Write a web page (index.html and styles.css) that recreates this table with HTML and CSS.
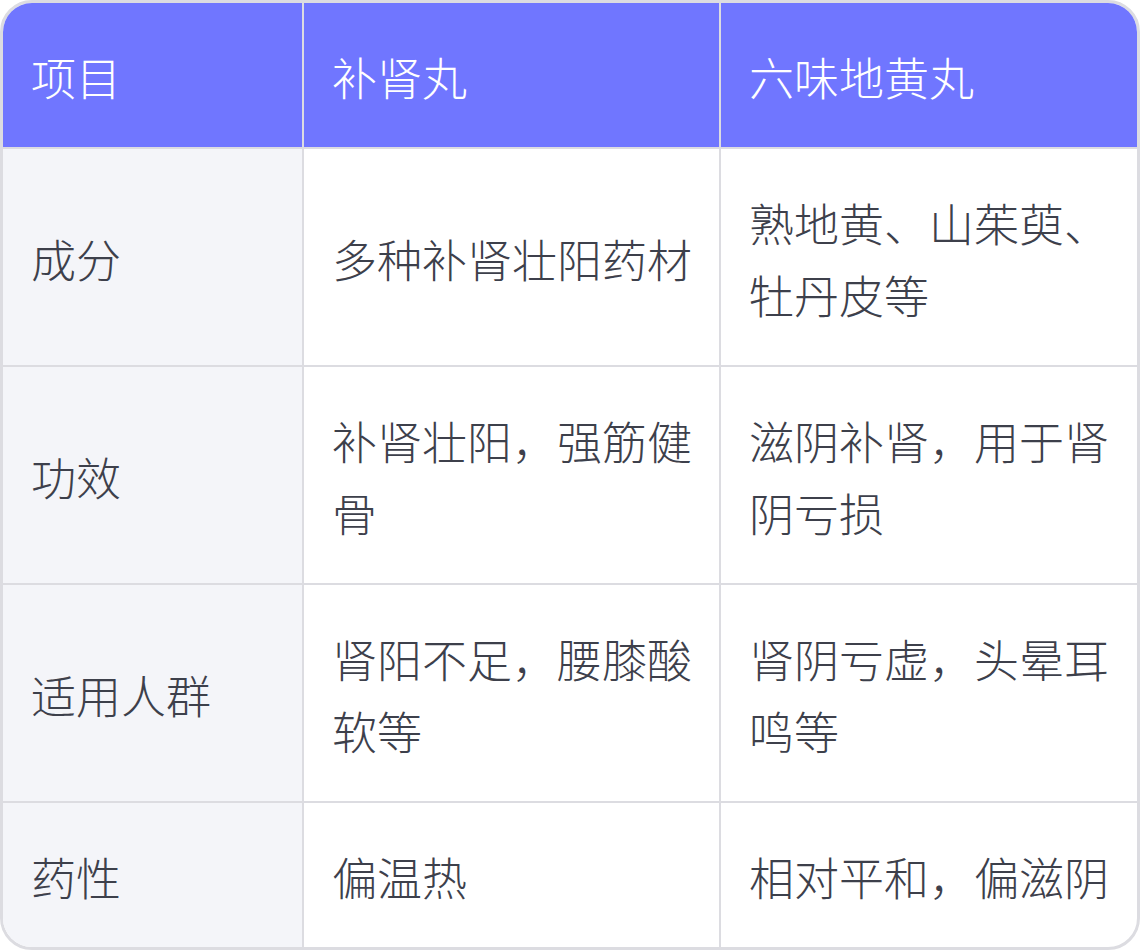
FILE: index.html
```html
<!DOCTYPE html>
<html lang="zh-CN">
<head>
<meta charset="utf-8">
<title>补肾丸与六味地黄丸对比</title>
<link rel="stylesheet" href="styles.css">
</head>
<body>
<div class="table-wrap">
  <table class="compare">
    <colgroup>
      <col class="c1">
      <col class="c2">
      <col class="c3">
    </colgroup>
    <thead>
      <tr>
        <th>项目</th>
        <th>补肾丸</th>
        <th>六味地黄丸</th>
      </tr>
    </thead>
    <tbody>
      <tr>
        <td class="label">成分</td>
        <td>多种补肾壮阳药材</td>
        <td>熟地黄、山茱萸、牡丹皮等</td>
      </tr>
      <tr>
        <td class="label">功效</td>
        <td>补肾壮阳，强筋健骨</td>
        <td>滋阴补肾，用于肾阴亏损</td>
      </tr>
      <tr>
        <td class="label">适用人群</td>
        <td>肾阳不足，腰膝酸软等</td>
        <td>肾阴亏虚，头晕耳鸣等</td>
      </tr>
      <tr>
        <td class="label">药性</td>
        <td>偏温热</td>
        <td>相对平和，偏滋阴</td>
      </tr>
    </tbody>
  </table>
</div>
</body>
</html>
```

FILE: styles.css
```css
html, body {
  margin: 0;
  padding: 0;
  background: #ffffff;
}

body {
  font-family: "Noto Sans CJK SC", "Noto Sans", sans-serif;
  color: #3d404b;
}

.table-wrap {
  width: 1140px;
  box-sizing: border-box;
  border: 3px solid #dcdce1;
  border-radius: 32px;
  overflow: hidden;
  background: #ffffff;
}

.compare {
  width: 100%;
  border-collapse: separate;
  border-spacing: 0;
  table-layout: fixed;
}

.c1 { width: 301px; }
.c2 { width: 417px; }

.compare th,
.compare td {
  padding: 38px 22px 34px 28px;
  font-size: 45px;
  font-weight: 300;
  line-height: 72px;
  text-align: left;
  vertical-align: middle;
  border-right: 2px solid #dcdce1;
  border-bottom: 2px solid #dcdce1;
  word-break: break-all;
}

.compare th {
  background: #7076ff;
  color: #ffffff;
}

.compare tr > *:last-child {
  border-right: none;
}

.compare tbody tr:last-child td {
  border-bottom: none;
}

.compare td.label {
  background: #f4f5f9;
}
```
